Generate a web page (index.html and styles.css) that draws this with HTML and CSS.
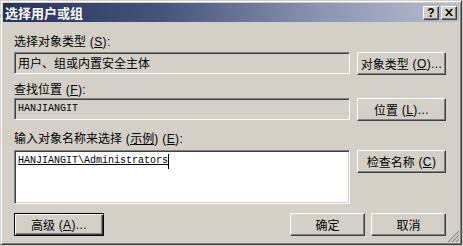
FILE: index.html
```html
<!DOCTYPE html>
<html lang="zh-CN">
<head>
<meta charset="utf-8">
<title>选择用户或组</title>
<link rel="stylesheet" href="styles.css">
</head>
<body>
<div class="window">
  <div class="titlebar">
    <span class="title">选择用户或组</span>
    <div class="caption-buttons">
      <div class="cap-btn"><span class="q">?</span></div>
      <div class="cap-btn">
        <svg width="8" height="7" viewBox="0 0 8 7"><path d="M0 0h2l2 2.5L6 0h2L5 3.5 8 7H6L4 4.5 2 7H0l3-3.5z" fill="#000"/></svg>
      </div>
    </div>
  </div>
  <div class="content">
    <div class="label">选择对象类型<span class="k"> (<u>S</u>):</span></div>
    <div class="row">
      <div class="field readonly">用户、组或内置安全主体</div>
      <div class="btn">对象类型<span class="k"> (<u>O</u>)...</span></div>
    </div>
    <div class="label l2">查找位置<span class="k"> (<u>F</u>):</span></div>
    <div class="row">
      <div class="field readonly mono">HANJIANGIT</div>
      <div class="btn">位置<span class="k"> (<u>L</u>)...</span></div>
    </div>
    <div class="label l3">输入对象名称来选择<span class="k"> (</span><u>示例</u><span class="k">) (<u>E</u>):</span></div>
    <div class="row">
      <div class="field area"><span class="mono entry">HANJIANGIT\Administrators</span><span class="caret"></span></div>
      <div class="btn">检查名称<span class="k"> (<u>C</u>)</span></div>
    </div>
    <div class="bottom">
      <div class="btn wide default">高级<span class="k"> (<u>A</u>)...</span></div>
      <div class="spacer"></div>
      <div class="btn small">确定</div>
      <div class="btn small">取消</div>
    </div>
  </div>
  <svg class="grip" width="12" height="12" viewBox="0 0 12 12">
    <path d="M11 1L1 11M11 5L5 11M11 9L9 11" stroke="#fff" stroke-width="1"/>
    <path d="M12 1L1 12M12 5L5 12M12 9L9 12" stroke="#808080" stroke-width="1.2"/>
  </svg>
</div>
</body>
</html>
```
FILE: styles.css
```css
html, body {
  margin: 0;
  padding: 0;
  background: #d4d0c8;
}
body {
  width: 463px;
  height: 246px;
  overflow: hidden;
  font-family: "Noto Sans CJK SC", "Noto Sans", sans-serif;
  font-size: 12px;
  color: #000;
}
.window {
  position: relative;
  box-sizing: border-box;
  width: 462px;
  height: 245px;
  border: 1px solid;
  border-color: #d4d0c8 #404040 #404040 #d4d0c8;
  box-shadow: inset 1px 1px #fff, inset -1px -1px #808080;
  padding: 2px;
  background: #d4d0c8;
}
.titlebar {
  height: 19px;
  display: flex;
  align-items: center;
  justify-content: space-between;
  padding: 0 2px 0 2px;
  background: linear-gradient(to right, #26325a 0%, #46547c 35%, #8a96b2 70%, #b6bece 100%);
}
.title {
  color: #fff;
  font-weight: bold;
  font-size: 13px;
  line-height: 19px;
}
.caption-buttons {
  display: flex;
  gap: 2px;
}
.cap-btn {
  box-sizing: border-box;
  width: 16px;
  height: 14px;
  background: #d4d0c8;
  border: 1px solid;
  border-color: #fff #404040 #404040 #fff;
  box-shadow: inset -1px -1px #808080;
  display: flex;
  align-items: center;
  justify-content: center;
}
.q {
  font-family: "Liberation Sans", sans-serif;
  font-weight: bold;
  font-size: 12px;
  line-height: 12px;
}
.content {
  padding: 11px 11px 0 11px;
}
.label {
  height: 16px;
  line-height: 16px;
  margin-bottom: 3px;
  white-space: pre;
}
.l2 { margin-top: 6px; margin-bottom: 1px; }
.l3 { margin-top: 9px; margin-bottom: 4px; }
.k {
  font-family: "Liberation Sans", sans-serif;
  font-size: 12px;
  letter-spacing: 0.4px;
  white-space: pre;
}
.row {
  display: grid;
  grid-template-columns: 336px 89px;
  column-gap: 7px;
  align-items: start;
}
.field {
  box-sizing: border-box;
  height: 22px;
  border: 1px solid;
  border-color: #808080 #fff #fff #808080;
  box-shadow: inset 1px 1px #404040, inset -1px -1px #d4d0c8;
  padding: 2px 3px;
  line-height: 16px;
  white-space: nowrap;
  overflow: hidden;
}
.readonly { background: #d4d0c8; }
.mono {
  font-family: "Liberation Mono", monospace;
  font-size: 10px;
}
.area {
  height: 54px;
  background: #fff;
  display: flex;
  align-items: flex-start;
}
.entry {
  text-decoration: underline;
  line-height: 16px;
}
.caret {
  display: inline-block;
  width: 1px;
  height: 15px;
  margin-top: 1px;
  background: #000;
}
.btn {
  box-sizing: border-box;
  height: 23px;
  border: 1px solid;
  border-color: #fff #404040 #404040 #fff;
  box-shadow: inset -1px -1px #808080;
  background: #d4d0c8;
  display: flex;
  align-items: center;
  justify-content: center;
  white-space: pre;
  line-height: 16px;
}
.bottom {
  display: flex;
  gap: 6px;
  margin-top: 9px;
  width: 432px;
}
.spacer { flex: 1; }
.btn.wide { width: 90px; }
.btn.small { width: 75px; }
.btn.default {
  border: 1px solid #000;
  box-shadow: inset 1px 1px #fff, inset -1px -1px #404040, inset -2px -2px #808080;
}
.grip {
  position: absolute;
  right: 2px;
  bottom: 2px;
}
```
